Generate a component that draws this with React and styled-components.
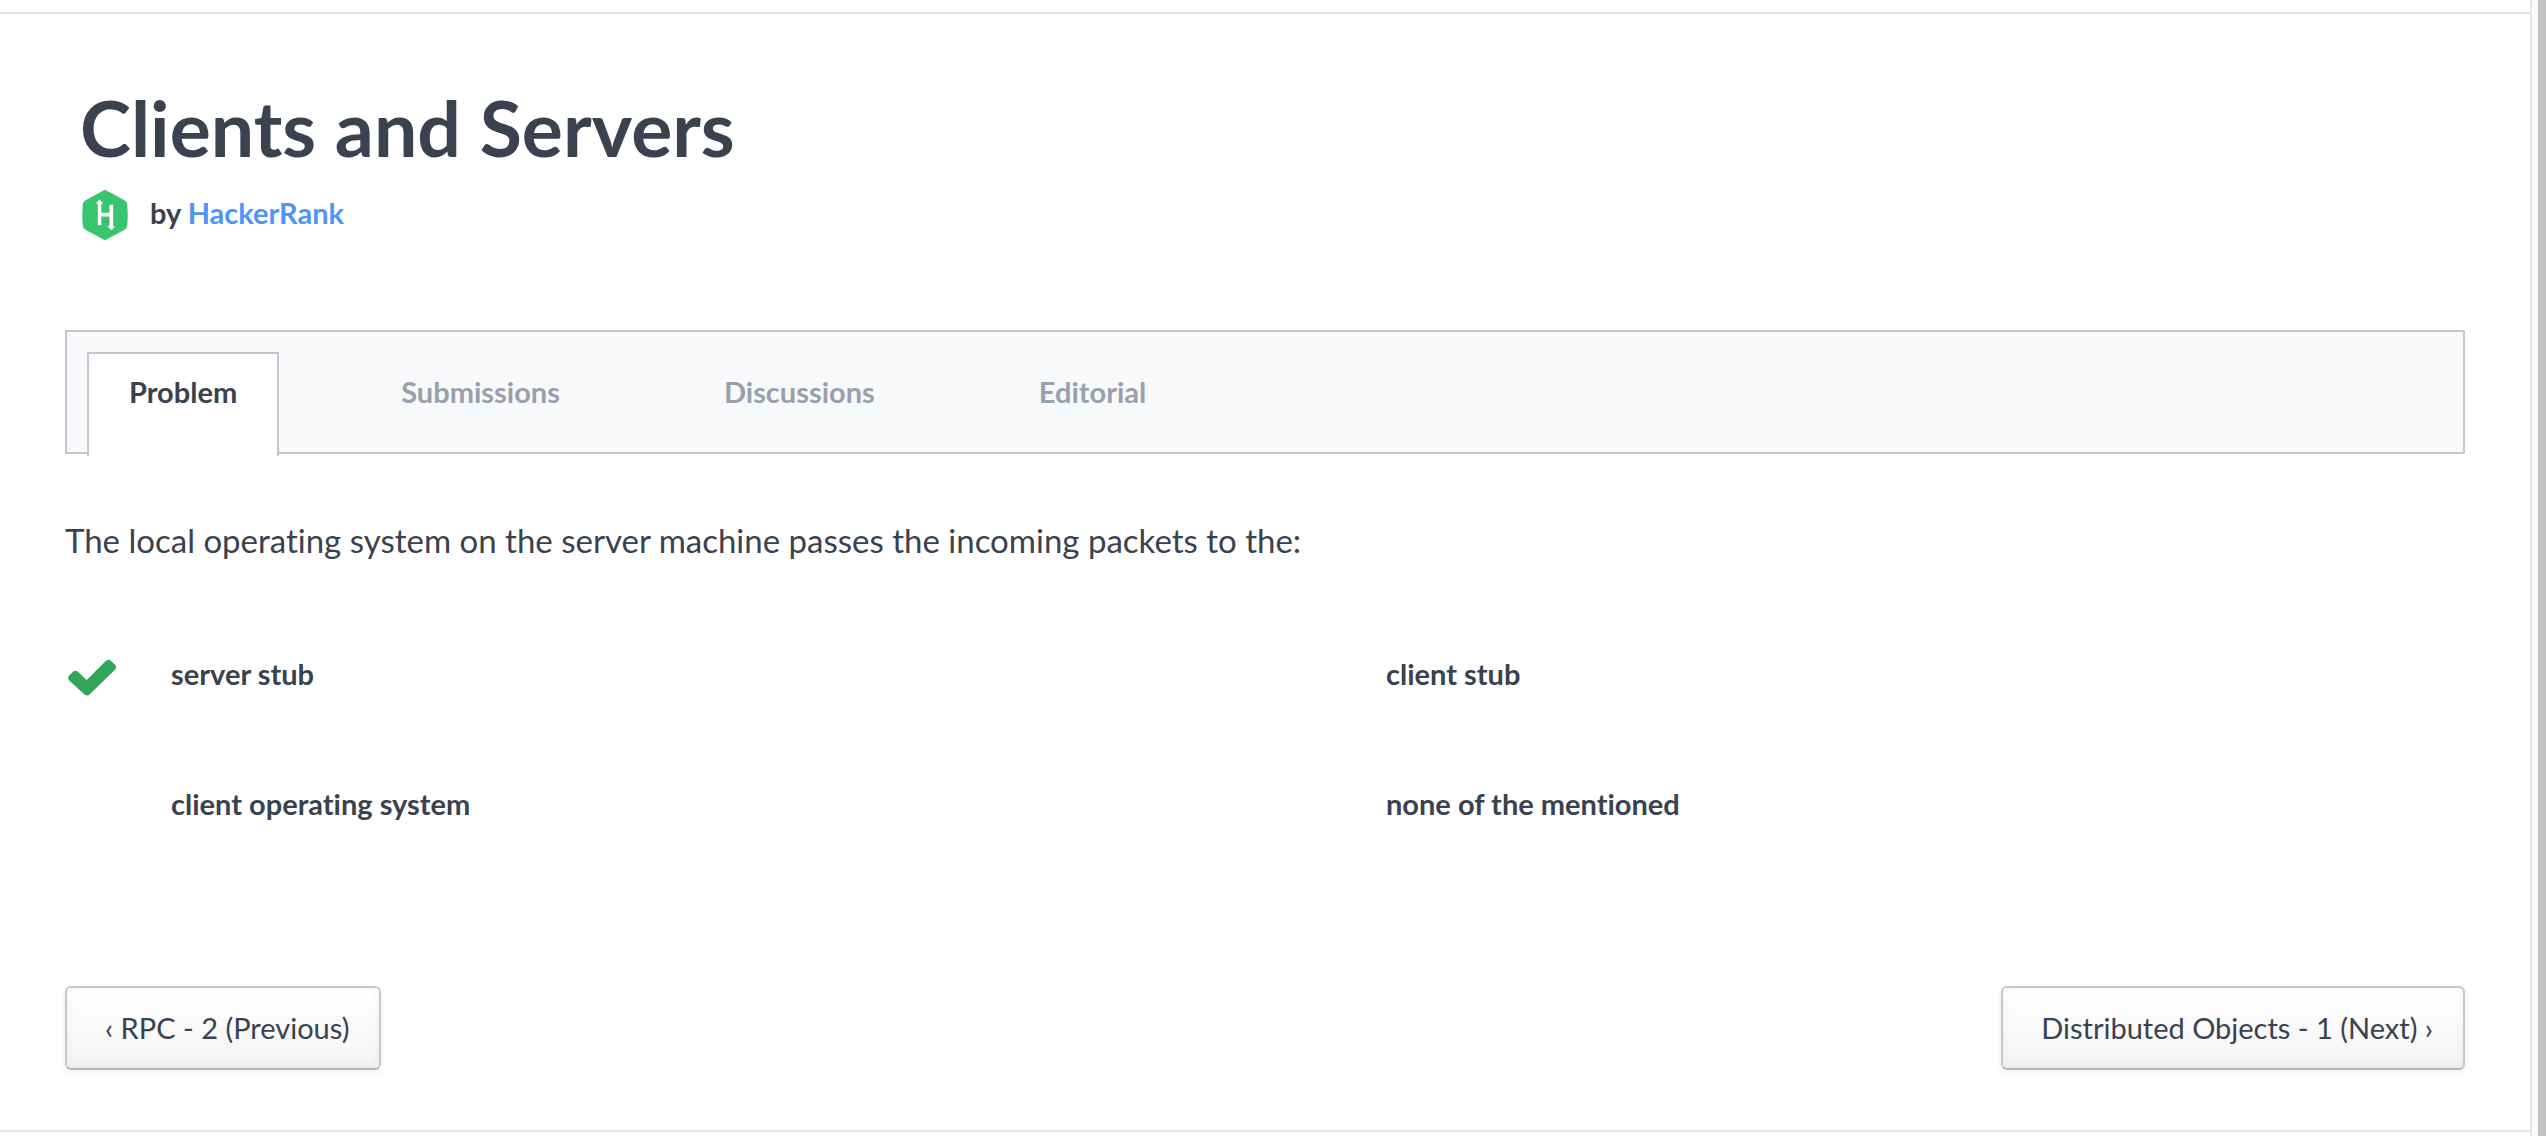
import React from "react";
import styled, { createGlobalStyle } from "styled-components";

const GlobalStyle = createGlobalStyle`
  *, *::before, *::after { box-sizing: border-box; }
  body {
    margin: 0;
    background: #c1c1c1;
    color: #39424e;
    font-family: Lato, "Open Sans", sans-serif;
    font-size: 29px;
    font-variant-ligatures: none;
    line-height: 36px;
  }
  h1, p, ul { margin: 0; padding: 0; }
`;

const Frame = styled.div`
  margin-right: 8px;
  padding-right: 6px;
  background: #fafafa;
`;

const Page = styled.div`
  min-height: 100vh;
  padding: 12px 0 4px;
  border-right: 2px solid #e6e6e6;
  background: #fff;
`;

const Challenge = styled.main`
  padding: 69px 65px 60px;
  border-top: 2px solid #dde2e8;
  border-bottom: 2px solid #e4e4e4;
`;

const Header = styled.header`
  padding: 0 15px;
`;

const Title = styled.h1`
  font-size: 77px;
  font-weight: 700;
  line-height: 88px;
`;

const Byline = styled.div`
  display: flex;
  align-items: flex-start;
  gap: 18px;
  margin-top: 16px;
  font-weight: 700;
  line-height: 52px;
`;

const Logo = styled.svg`
  display: block;
  width: 52px;
  height: 56px;
`;

const AuthorLink = styled.a`
  color: #4c96f5;
  text-decoration: none;
`;

const Tabs = styled.nav`
  display: flex;
  gap: 80px;
  margin-top: 87px;
  height: 124px;
  padding: 20px 20px 0;
  border: 2px solid #c2c7d0;
  background: #f8f9fb;
`;

const Tab = styled.a`
  height: 104px;
  padding: 20px 40px;
  border: 2px solid ${(p) => (p.$active ? "#c2c7d0" : "transparent")};
  border-bottom: 0;
  background: ${(p) => (p.$active ? "#fff" : "transparent")};
  color: ${(p) => (p.$active ? "#39424e" : "#98a0b0")};
  font-weight: 700;
  text-decoration: none;
`;

const Question = styled.p`
  margin-top: 62px;
  font-size: 33px;
  font-weight: 400;
  line-height: 48px;
`;

const Options = styled.ul`
  display: grid;
  grid-template-columns: 1fr 1fr;
  column-gap: 30px;
  row-gap: 90px;
  margin-top: 90px;
  list-style: none;
  font-weight: 700;
`;

const Option = styled.li`
  display: grid;
  grid-template-columns: 106px 1fr;
  align-items: center;
  height: 40px;
`;

const Check = styled.svg`
  display: block;
  width: 54px;
  height: 40px;
  overflow: visible;
`;

const Pager = styled.nav`
  display: flex;
  justify-content: space-between;
  margin-top: 162px;
`;

const PagerButton = styled.button`
  height: 84px;
  padding: 0 30px 0 38px;
  border: 2px solid #c2c7d0;
  border-bottom-color: #b0b7c5;
  border-radius: 6px;
  background: linear-gradient(#fff, #f4f4f4);
  box-shadow: inset 0 -2px 10px rgba(0, 0, 0, 0.05), 0 2px 6px rgba(0, 0, 0, 0.08);
  color: #39424e;
  font: inherit;
`;

const tabs = ["Problem", "Submissions", "Discussions", "Editorial"];

const options = [
  { label: "server stub", correct: true },
  { label: "client stub" },
  { label: "client operating system" },
  { label: "none of the mentioned" },
];

function HackerRankLogo() {
  return (
    <Logo viewBox="0 0 52 56" aria-hidden="true">
      <path
        d="M23 3.700q2-1.200 4 0l17.500 9.500q2.500 1.500 2.800 4.300q.9 10.500 0 21q-.3 2.800-2.800 4.300L27 52.300q-2 1.200-4 0L5.500 42.800q-2.500-1.500-2.800-4.300q-.9-10.500 0-21q.3-2.800 2.800-4.300z"
        fill="#39c46f"
      />
      <path
        d="M15.800 16.500L19.600 12.500l3.800 4h-2.100v9.300h8.200v-8h3.600v21.500h2.200L31.300 43.300l-4-4h2.200v-9.700h-8.200v8.600h-3.500v-21.700z"
        fill="#fff"
      />
    </Logo>
  );
}

function CheckMark() {
  return (
    <Check viewBox="0 -6 54 40" role="img" aria-label="Correct answer">
      <path
        d="M4.200 15.600L8 11.800q2.500-2 5 0l8.700 8.200L41 .8q2.500-2 5 0l4 4q2 2.500 0 5L24.500 34.500q-2.500 2-5 0L4.200 20.600q-2-2.500 0-5z"
        fill="#31a65a"
      />
    </Check>
  );
}

export default function App() {
  return (
    <>
      <GlobalStyle />
      <Frame>
        <Page>
          <Challenge>
            <Header>
              <Title>Clients and Servers</Title>
              <Byline>
                <HackerRankLogo />
                <span>
                  by <AuthorLink href="#author">HackerRank</AuthorLink>
                </span>
              </Byline>
            </Header>
            <Tabs aria-label="Challenge sections">
              {tabs.map((name, i) => (
                <Tab key={name} href={"#" + name.toLowerCase()} $active={i === 0}>
                  {name}
                </Tab>
              ))}
            </Tabs>
            <Question>
              The local operating system on the server machine passes the incoming packets to the:
            </Question>
            <Options>
              {options.map((o) => (
                <Option key={o.label}>
                  <span>{o.correct && <CheckMark />}</span>
                  <span>{o.label}</span>
                </Option>
              ))}
            </Options>
            <Pager aria-label="Challenges">
              <PagerButton type="button">‹ RPC - 2 (Previous)</PagerButton>
              <PagerButton type="button">Distributed Objects - 1 (Next) ›</PagerButton>
            </Pager>
          </Challenge>
        </Page>
      </Frame>
    </>
  );
}
